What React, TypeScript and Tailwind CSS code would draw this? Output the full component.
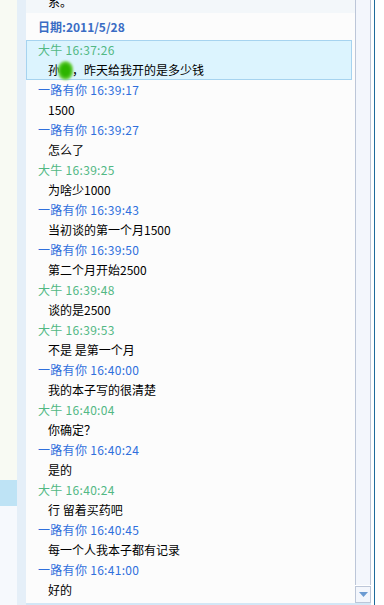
import React from 'react';

interface ChatMessage {
  name: string;
  time: string;
  text: string;
  highlight?: boolean;
}

const messages: ChatMessage[] = [
  { name: '大牛', time: '16:37:26', text: '', highlight: true },
  { name: '一路有你', time: '16:39:17', text: '1500' },
  { name: '一路有你', time: '16:39:27', text: '怎么了' },
  { name: '大牛', time: '16:39:25', text: '为啥少1000' },
  { name: '一路有你', time: '16:39:43', text: '当初谈的第一个月1500' },
  { name: '一路有你', time: '16:39:50', text: '第二个月开始2500' },
  { name: '大牛', time: '16:39:48', text: '谈的是2500' },
  { name: '大牛', time: '16:39:53', text: '不是 是第一个月' },
  { name: '一路有你', time: '16:40:00', text: '我的本子写的很清楚' },
  { name: '大牛', time: '16:40:04', text: '你确定？' },
  { name: '一路有你', time: '16:40:24', text: '是的' },
  { name: '大牛', time: '16:40:24', text: '行 留着买药吧' },
  { name: '一路有你', time: '16:40:45', text: '每一个人我本子都有记录' },
  { name: '一路有你', time: '16:41:00', text: '好的' },
];

const font = { fontFamily: '"Noto Sans CJK SC", "Noto Sans", sans-serif' };

const MessageRow: React.FC<{ msg: ChatMessage }> = ({ msg }) => {
  const nameColor = msg.name === '大牛' ? 'text-[#52b884]' : 'text-[#2f6fdc]';
  return (
    <div
      className={
        msg.highlight
          ? 'mr-[3px] h-[40px] border border-[#a6d3ef] bg-[#dcf4fe] pl-[11px]'
          : 'h-[40px] pl-[12px]'
      }
    >
      <div className={`h-[20px] leading-[20px] tracking-[0.3px] ${nameColor} ${msg.highlight ? '-mt-px' : ''}`}>
        {msg.name} {msg.time}
      </div>
      <div className="flex h-[20px] items-center pl-[10px] leading-[20px] text-black">
        {msg.highlight ? (
          <>
            <span>孙</span>
            <span className="-ml-[2px] inline-block h-[19px] w-[15px] rounded-full bg-[radial-gradient(ellipse,#2cb400_40%,#6fd048_65%,rgba(220,244,254,0)_100%)] blur-[1px]" />
            <span className="-ml-[1px]">，昨天给我开的是多少钱</span>
          </>
        ) : (
          msg.text
        )}
      </div>
    </div>
  );
};

export default function App() {
  return (
    <div className="flex h-[605px] w-[384px] overflow-hidden bg-white text-[12px]" style={font}>
      {/* left list column */}
      <div className="flex w-[17px] flex-col">
        <div className="h-[480px] bg-[#f8faf3]" />
        <div className="h-[26px] bg-[#bee3f5]" />
        <div className="flex-1 bg-[#f6f9fd]" />
      </div>
      <div className="w-[9px] bg-[#e5eff8]" />

      {/* chat panel */}
      <div className="flex w-[329px] flex-col bg-[#fcfcfc]">
        <div className="h-[13px] overflow-hidden bg-[#f3f7fa] pl-[22px]">
          <div className="-mt-[8px] leading-[20px] text-black">系。</div>
        </div>
        <div className="flex h-[27px] items-center pl-[12px] font-bold text-[#3a6cc4]">日期:2011/5/28</div>
        {messages.map((m, i) => (
          <MessageRow key={i} msg={m} />
        ))}
        <div className="flex-1" />
        <div className="h-[2px] bg-[#d3e7f6]" />
      </div>

      {/* scrollbar */}
      <div className="flex w-[16px] flex-col">
        <div className="h-[585px] border-x border-[#bcc6d8] bg-[#f3f6fc]" />
        <div className="h-px" />
        <div className="flex h-[17px] items-center justify-center border border-[#bcc6d8] bg-[#f3f6fc]">
          <svg width="9" height="5" viewBox="0 0 9 5">
            <path d="M0 0h9L4.5 5z" fill="#6b9bd2" />
          </svg>
        </div>
        <div className="h-[2px] bg-[#d3e7f6]" />
      </div>
      <div className="w-[3px] bg-white" />
      <div className="w-[1px] bg-[#1f6b9b]" />
      <div className="flex-1 bg-white" />
    </div>
  );
}
